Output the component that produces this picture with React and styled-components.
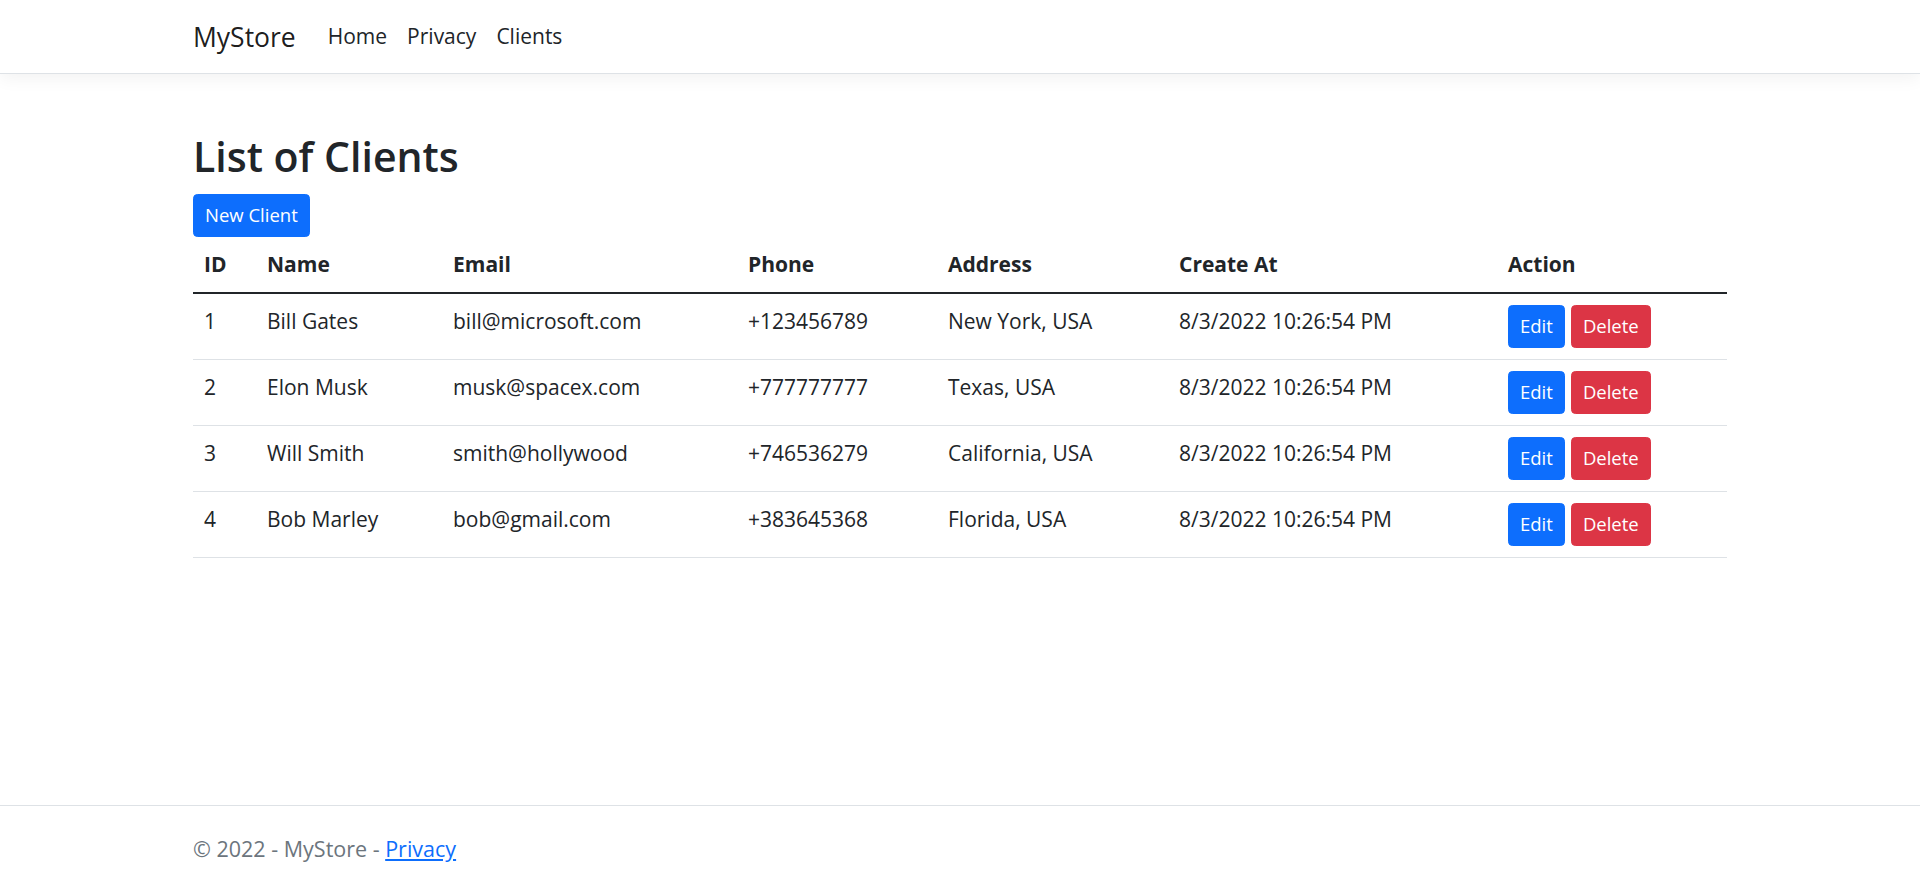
import React from 'react';
import styled, { createGlobalStyle, css } from 'styled-components';

const clients = [
    { id: 1, name: 'Bill Gates', email: 'bill@microsoft.com', phone: '+123456789', address: 'New York, USA', createdAt: '8/3/2022 10:26:54 PM' },
    { id: 2, name: 'Elon Musk', email: 'musk@spacex.com', phone: '+777777777', address: 'Texas, USA', createdAt: '8/3/2022 10:26:54 PM' },
    { id: 3, name: 'Will Smith', email: 'smith@hollywood', phone: '+746536279', address: 'California, USA', createdAt: '8/3/2022 10:26:54 PM' },
    { id: 4, name: 'Bob Marley', email: 'bob@gmail.com', phone: '+383645368', address: 'Florida, USA', createdAt: '8/3/2022 10:26:54 PM' },
];

const columns = [
    { label: 'ID', width: 63 },
    { label: 'Name', width: 186 },
    { label: 'Email', width: 295 },
    { label: 'Phone', width: 200 },
    { label: 'Address', width: 231 },
    { label: 'Create At', width: 329 },
    { label: 'Action', width: 230 },
];

const GlobalStyle = createGlobalStyle`
    * { box-sizing: border-box; }
    body {
        margin: 0;
        background: #fff;
        color: #212529;
        font-family: "Segoe UI", "Open Sans", "Noto Sans", sans-serif;
        font-size: 21px;
        line-height: 33px;
    }
`;

const App = () => {
    return (<Page>
        <GlobalStyle />
        <Navbar>
            <Container>
                <Brand href="#">MyStore</Brand>
                <NavList>
                    <NavLink href="#">Home</NavLink>
                    <NavLink href="#">Privacy</NavLink>
                    <NavLink href="#">Clients</NavLink>
                </NavList>
            </Container>
        </Navbar>

        <Main>
            <Container $column>
                <Title>List of Clients</Title>
                <div>
                    <Button $variant="primary">New Client</Button>
                </div>
                <Table>
                    <colgroup>
                        {columns.map(c => <col key={c.label} style={{ width: c.width }} />)}
                    </colgroup>
                    <thead>
                        <tr>
                            {columns.map(c => <Th key={c.label}>{c.label}</Th>)}
                        </tr>
                    </thead>
                    <tbody>
                        {clients.map(client => (
                            <Row key={client.id}>
                                <Td>{client.id}</Td>
                                <Td>{client.name}</Td>
                                <Td>{client.email}</Td>
                                <Td>{client.phone}</Td>
                                <Td>{client.address}</Td>
                                <Td>{client.createdAt}</Td>
                                <Td>
                                    <Actions>
                                        <Button $variant="primary">Edit</Button>
                                        <Button $variant="danger">Delete</Button>
                                    </Actions>
                                </Td>
                            </Row>
                        ))}
                    </tbody>
                </Table>
            </Container>
        </Main>

        <Footer>
            <Container>
                &copy; 2022 - MyStore -&nbsp;<FooterLink href="#">Privacy</FooterLink>
            </Container>
        </Footer>
    </Page>);
}

export default App;

const Page = styled.div`
    min-height: 100vh;
    display: flex;
    flex-direction: column;
`

const Container = styled.div`
    width: 1534px;
    margin: 0 auto;
    display: flex;
    ${props => props.$column ? css`
        flex-direction: column;
    ` : css`
        align-items: center;
    `}
`

const Navbar = styled.nav`
    height: 74px;
    display: flex;
    align-items: stretch;
    background: #fff;
    border-bottom: 1px solid #dee2e6;
    box-shadow: 0 5px 16px rgba(0, 0, 0, 0.05);

    & > ${Container} {
        height: 73px;
        padding-top: 2px;
    }
`

const Brand = styled.a`
    font-size: 26.5px;
    line-height: 41px;
    color: rgba(0, 0, 0, 0.9);
    text-decoration: none;
    margin-right: 22px;
`

const NavList = styled.div`
    display: flex;
    margin-bottom: 2px;
`

const NavLink = styled.a`
    padding: 0 10px;
    font-size: 21px;
    line-height: 33px;
    color: #212529;
    text-decoration: none;
`

const Main = styled.main`
    padding-top: 56px;
`

const Title = styled.h1`
    margin: 0 0 11px;
    font-size: 41px;
    line-height: 52.8px;
    font-weight: 600;
`

const Button = styled.button`
    height: 43px;
    padding: 0 11px;
    border: 1.375px solid;
    border-radius: 4.4px;
    font-family: inherit;
    font-size: 18.5px;
    line-height: 40px;
    color: #fff;
    cursor: pointer;
    ${props => props.$variant === 'danger' ? css`
        background: #dc3545;
        border-color: #dc3545;
    ` : css`
        background: #0d6efd;
        border-color: #0d6efd;
    `}
`

const Table = styled.table`
    width: 100%;
    table-layout: fixed;
    border-collapse: collapse;

    thead tr {
        border-bottom: 2px solid #212529;
    }
`

const Th = styled.th`
    padding: 11px;
    text-align: left;
    font-weight: 700;
    vertical-align: bottom;
`

const Row = styled.tr`
    border-bottom: 1px solid #dee2e6;
`

const Td = styled.td`
    padding: 11px;
    vertical-align: top;
    white-space: nowrap;
`

const Actions = styled.div`
    display: flex;
    gap: 6px;
`

const Footer = styled.footer`
    margin-top: auto;
    height: 80px;
    overflow: hidden;
    border-top: 1px solid #dee2e6;
    color: #6c757d;
    font-size: 21.5px;
    line-height: 86px;

    & > ${Container} {
        align-items: baseline;
    }
`

const FooterLink = styled.a`
    color: #0d6efd;
    text-decoration: underline;
`
